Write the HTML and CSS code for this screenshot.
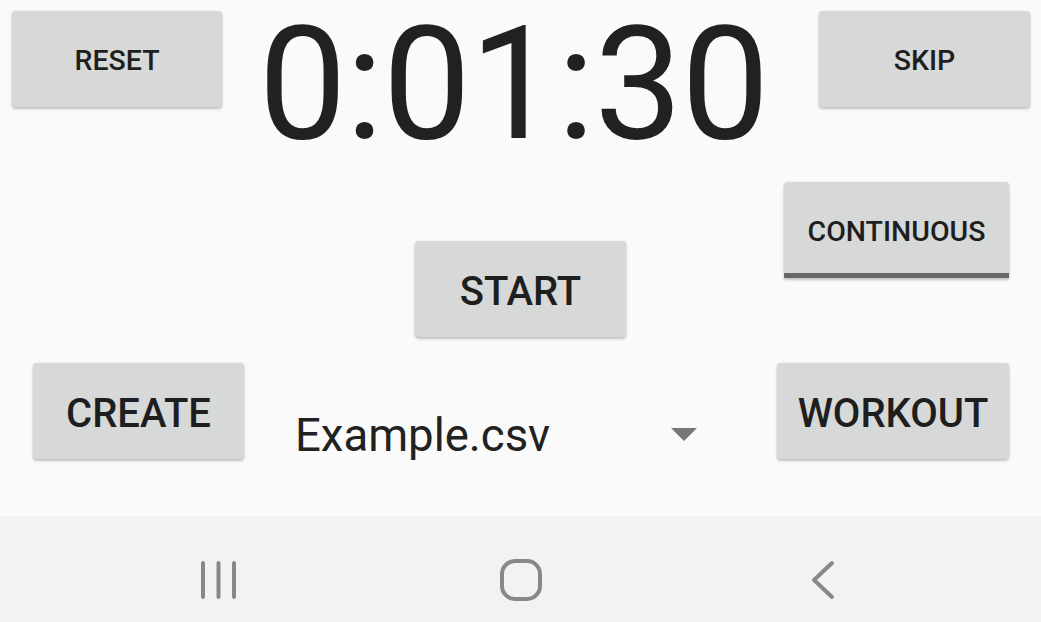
FILE: index.html
```html
<!DOCTYPE html>
<html>
<head>
<meta charset="utf-8">
<link rel="stylesheet" href="styles.css">
</head>
<body>
<div class="screen">
  <main class="main">
    <section class="top">
      <div class="btn btn-small btn-reset">RESET</div>
      <div class="timer">0:01:30</div>
      <div class="btn btn-small btn-skip">SKIP</div>
    </section>
    <section class="middle">
      <div class="side"></div>
      <div class="btn btn-large btn-start">START</div>
      <div class="side side-right">
        <div class="btn btn-small btn-toggle">CONTINUOUS</div>
      </div>
    </section>
    <section class="bottom">
      <div class="btn btn-large btn-create">CREATE</div>
      <div class="spinner">
        <span class="spinner-text">Example.csv</span>
        <span class="spinner-arrow"></span>
      </div>
      <div class="btn btn-large btn-workout">WORKOUT</div>
    </section>
  </main>
  <nav class="navbar">
    <div class="nav-item">
      <svg width="40" height="40" viewBox="0 0 40 40">
        <g stroke="#888" stroke-width="4" stroke-linecap="round">
          <line x1="4" y1="3" x2="4" y2="37"/>
          <line x1="19.5" y1="3" x2="19.5" y2="37"/>
          <line x1="35" y1="3" x2="35" y2="37"/>
        </g>
      </svg>
    </div>
    <div class="nav-item">
      <svg width="44" height="44" viewBox="0 0 44 44">
        <rect x="3" y="3" width="38" height="38" rx="13" ry="13" fill="none" stroke="#888" stroke-width="4"/>
      </svg>
    </div>
    <div class="nav-item">
      <svg width="40" height="40" viewBox="0 0 40 40">
        <polyline points="29,3 11,20 29,37" fill="none" stroke="#888" stroke-width="4" stroke-linecap="round" stroke-linejoin="round"/>
      </svg>
    </div>
  </nav>
</div>
</body>
</html>
```
FILE: styles.css
```css
* { box-sizing: border-box; }

html, body {
  margin: 0;
  padding: 0;
  background: #fafafa;
}

body {
  font-family: Roboto, "Liberation Sans", sans-serif;
  color: #202020;
}

.screen {
  width: 1041px;
  height: 622px;
  display: flex;
  flex-direction: column;
  overflow: hidden;
}

.main {
  height: 516px;
  background: #fafafa;
}

.btn {
  background: #d7d8d8;
  border-radius: 4px;
  box-shadow: 0 2px 3px rgba(0, 0, 0, 0.22), 0 0 2px rgba(0, 0, 0, 0.10);
  display: flex;
  align-items: center;
  justify-content: center;
  font-weight: 500;
  color: #1e1e1e;
  height: 96px;
  flex-shrink: 0;
}

.btn-small {
  font-size: 28.5px;
  width: 210px;
  padding-top: 3px;
}

.btn-large {
  font-size: 40px;
  width: 211px;
  padding-top: 5px;
}

/* Top row */
.top {
  display: flex;
  align-items: flex-start;
  padding: 0 11px 0 12px;
}

.btn-reset,
.btn-skip {
  margin-top: 11px;
}

.btn-skip { width: 211px; }

.timer {
  flex: 1;
  text-align: center;
  font-size: 157px;
  line-height: 124px;
  padding-top: 22px;
  padding-right: 14px;
  font-weight: 400;
  color: #212121;
  letter-spacing: -1px;
  white-space: nowrap;
}

/* Middle row */
.middle {
  height: 217px;
  display: grid;
  grid-template-columns: 1fr auto 1fr;
}

.btn-start {
  margin-top: 95px;
}

.side-right {
  display: flex;
  justify-content: flex-end;
  align-items: flex-start;
  padding-right: 32px;
}

.btn-toggle {
  width: 225px;
  margin-top: 36px;
  border-bottom: 5px solid #686868;
  border-radius: 4px 4px 0 0;
  padding-top: 8px;
}

/* Bottom row */
.bottom {
  height: 96px;
  display: flex;
  padding: 0 32px 0 33px;
}

.btn-workout { width: 232px; }

.spinner {
  flex: 1;
  align-self: flex-end;
  height: 48px;
  display: flex;
  align-items: center;
  justify-content: space-between;
  padding: 2px 80px 0 51px;
}

.spinner-text {
  font-size: 45.5px;
  line-height: 48px;
  color: #212121;
}

.spinner-arrow {
  width: 0;
  height: 0;
  border-left: 13px solid transparent;
  border-right: 13px solid transparent;
  border-top: 13px solid #777;
  margin-bottom: 4px;
}

/* Nav bar */
.navbar {
  flex: 1;
  background: #f2f2f2;
  display: grid;
  grid-template-columns: repeat(3, 302px);
  justify-content: center;
  align-items: center;
  padding-top: 22px;
}

.nav-item {
  display: flex;
  justify-content: center;
  align-items: center;
}

.nav-item svg { display: block; }
```
